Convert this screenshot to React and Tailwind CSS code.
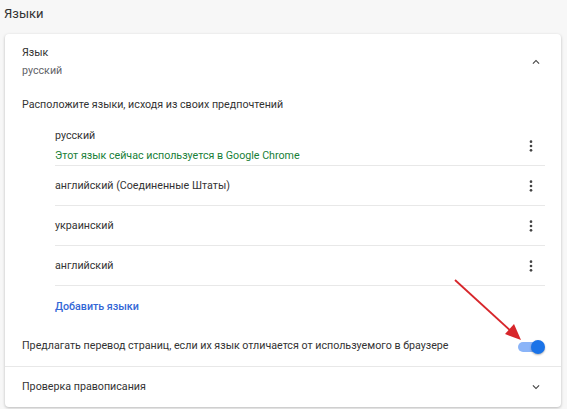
import React from 'react';

const Kebab = () => (
  <svg width="16" height="16" viewBox="0 0 24 24" className="fill-[#444]">
    <circle cx="12" cy="5.5" r="2" />
    <circle cx="12" cy="12" r="2" />
    <circle cx="12" cy="18.5" r="2" />
  </svg>
);

const Chevron = ({ up }) => (
  <svg width="14" height="14" viewBox="0 0 24 24" className="fill-[#444]">
    {up ? (
      <path d="M7.41 15.41 12 10.83l4.59 4.58L18 14l-6-6-6 6z" />
    ) : (
      <path d="M7.41 8.59 12 13.17l4.59-4.58L18 10l-6 6-6-6z" />
    )}
  </svg>
);

const LangRow = ({ name, note, last }) => (
  <div className={`ml-[50px] mr-[16px] flex items-center justify-between ${last ? '' : 'border-b border-[#e8e8e8]'} ${note ? 'pt-[11px] h-[51px]' : 'h-[40px]'}`}>
    <div className={note ? 'self-start' : ''}>
      <div className="leading-[20px] text-[#333]">{name}</div>
      {note && <div className="leading-[20px] text-[#188038]">{note}</div>}
    </div>
    <div className="mr-[6px]">
      <Kebab />
    </div>
  </div>
);

export default function App() {
  return (
    <div className="min-h-[409px] bg-[#f7f7f7] text-[10.7px] pt-[4px] pb-[4px] relative" style={{ fontFamily: 'Roboto, "Liberation Sans", sans-serif' }}>
      <div className="px-[4px] leading-[20px] text-[13px] text-[#333]">Языки</div>
      <div className="mt-[10px] ml-[5px] w-[556px] bg-white rounded-[4px] shadow-[0_1px_3px_rgba(0,0,0,0.25)]">
        <div className="px-[17px] pt-[10px] flex justify-between">
          <div>
            <div className="leading-[18px] text-[#333]">Язык</div>
            <div className="leading-[18px] text-[#5f6368]">русский</div>
          </div>
          <div className="mt-[11px] mr-[1px]">
            <Chevron up />
          </div>
        </div>
        <div className="px-[17px] mt-[15px] leading-[20px] text-[#333]">
          Расположите языки, исходя из своих предпочтений
        </div>
        <LangRow name="русский" note="Этот язык сейчас используется в Google Chrome" />
        <LangRow name="английский (Соединенные Штаты)" />
        <LangRow name="украинский" />
        <LangRow name="английский" />
        <div className="ml-[50px] h-[41px] pt-[1px] flex items-center font-medium text-[#3367d6]">
          Добавить языки
        </div>
        <div className="px-[17px] h-[40px] flex items-center justify-between border-b border-[#e8e8e8]">
          <span className="text-[#333]">Предлагать перевод страниц, если их язык отличается от используемого в браузере</span>
          <div className="relative w-[25px] h-[10px] rounded-full bg-[#8ab4f8] mr-[1px]">
            <div className="absolute right-[-2px] top-[-2px] w-[14px] h-[14px] rounded-full bg-[#1a73e8] shadow-[0_1px_2px_rgba(0,0,0,0.3)]" />
          </div>
        </div>
        <div className="px-[17px] h-[40px] flex items-center justify-between">
          <span className="text-[#333]">Проверка правописания</span>
          <div className="mr-[1px]">
            <Chevron />
          </div>
        </div>
      </div>
      <svg className="absolute left-0 top-0 pointer-events-none" width="567" height="409">
        <line x1="455" y1="280" x2="512" y2="332" stroke="#d7262b" strokeWidth="1.8" />
        <polygon points="521,340 505,334 514,324" fill="#d7262b" />
      </svg>
    </div>
  );
}
